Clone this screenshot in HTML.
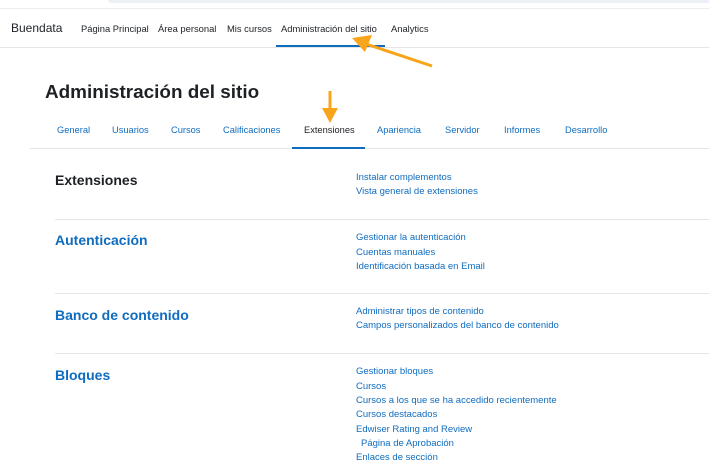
<!DOCTYPE html>
<html><head><meta charset="utf-8"><style>
*{margin:0;padding:0;box-sizing:border-box}
body{width:709px;height:461px;overflow:hidden;background:#fff;font-family:"Liberation Sans",sans-serif;position:relative;color:#1d2125}
.a{position:absolute;white-space:nowrap}
.nav{font-size:9.4px;top:23px;color:#1d2125}
.tab{font-size:9.3px;top:125px;color:#0f6cbf}
.h{font-size:14px;font-weight:bold;color:#0f6cbf;left:55px}
.l{font-size:9.5px;color:#0f6cbf;left:356px}
.sep{position:absolute;left:55px;right:0;height:1px;background:#e6e6e6}
</style></head><body>
<div class="a" style="left:108px;top:0;width:601px;height:3px;background:#eef0f8;border-radius:0 0 0 8px"></div>
<div class="a" style="left:0;top:8px;width:709px;height:1px;background:#ececec"></div>
<div class="a" style="left:0;top:47px;width:709px;height:1px;background:#e6e6e6"></div>
<div class="a" style="left:11px;top:21px;font-size:12px">Buendata</div>
<div class="a nav" style="left:81px">Página Principal</div>
<div class="a nav" style="left:158px">Área personal</div>
<div class="a nav" style="left:227px">Mis cursos</div>
<div class="a nav" style="left:281px">Administración del sitio</div>
<div class="a nav" style="left:391px">Analytics</div>
<div class="a" style="left:276px;top:45px;width:109px;height:2px;background:#0f6cbf"></div>
<div class="a" style="left:45px;top:82px;font-size:18.9px;font-weight:bold;color:#1d2125">Administración del sitio</div>
<div class="a tab" style="left:57px">General</div>
<div class="a tab" style="left:112px">Usuarios</div>
<div class="a tab" style="left:171px">Cursos</div>
<div class="a tab" style="left:223px">Calificaciones</div>
<div class="a tab" style="left:304px;color:#1d2125">Extensiones</div>
<div class="a tab" style="left:377px">Apariencia</div>
<div class="a tab" style="left:445px">Servidor</div>
<div class="a tab" style="left:504px">Informes</div>
<div class="a tab" style="left:565px">Desarrollo</div>
<div class="a" style="left:30px;top:148px;width:679px;height:1px;background:#e6e6e6"></div>
<div class="a" style="left:292px;top:147px;width:73px;height:2px;background:#0f6cbf"></div>
<div class="a h" style="top:172px;color:#1d2125">Extensiones</div>
<div class="a l" style="top:172px">Instalar complementos</div>
<div class="a l" style="top:186px">Vista general de extensiones</div>
<div class="sep" style="top:219px"></div>
<div class="a h" style="top:232px">Autenticación</div>
<div class="a l" style="top:232px">Gestionar la autenticación</div>
<div class="a l" style="top:247px">Cuentas manuales</div>
<div class="a l" style="top:261px">Identificación basada en Email</div>
<div class="sep" style="top:293px"></div>
<div class="a h" style="top:307px">Banco de contenido</div>
<div class="a l" style="top:306px">Administrar tipos de contenido</div>
<div class="a l" style="top:320px">Campos personalizados del banco de contenido</div>
<div class="sep" style="top:353px"></div>
<div class="a h" style="top:367px">Bloques</div>
<div class="a l" style="top:366px">Gestionar bloques</div>
<div class="a l" style="top:381px">Cursos</div>
<div class="a l" style="top:395px">Cursos a los que se ha accedido recientemente</div>
<div class="a l" style="top:409px">Cursos destacados</div>
<div class="a l" style="top:424px">Edwiser Rating and Review</div>
<div class="a l" style="top:438px;left:361px">Página de Aprobación</div>
<div class="a l" style="top:452px">Enlaces de sección</div>
<svg class="a" style="left:0;top:0" width="709" height="461">
<g stroke="#f8a51b" stroke-width="3" fill="#f8a51b">
<line x1="432" y1="66" x2="366" y2="44"/>
<polygon points="352,38 372,35 365,52" stroke="none"/>
<line x1="330" y1="91" x2="330" y2="110"/>
<polygon points="322,108 338,108 330,123" stroke="none"/>
</g></svg>
</body></html>
